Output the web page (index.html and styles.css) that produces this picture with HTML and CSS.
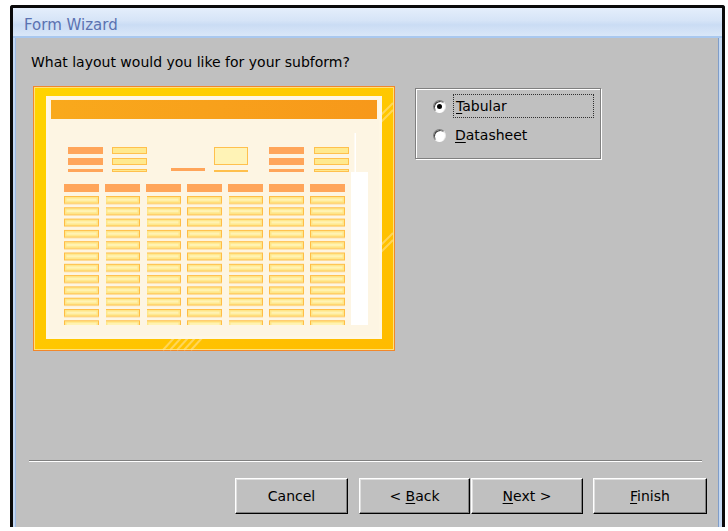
FILE: index.html
```html
<!DOCTYPE html>
<html lang="en">
<head>
<meta charset="utf-8">
<title>Form Wizard</title>
<link rel="stylesheet" href="styles.css">
</head>
<body>
<div class="window">
  <div class="titlebar"><span class="title">Form Wizard</span></div>
  <div class="client">
    <p class="prompt">What layout would you like for your subform?</p>
    <div class="choice-row">
      <svg class="preview" width="362" height="265" viewBox="0 0 362 265">
        <defs>
          <linearGradient id="frameFill" x1="0" y1="0" x2="1" y2="1">
            <stop offset="0" stop-color="#ffd400"/>
            <stop offset="1" stop-color="#ffbb00"/>
          </linearGradient>
          <linearGradient id="headFill" x1="0" y1="0" x2="1" y2="0">
            <stop offset="0" stop-color="#f9a91c"/>
            <stop offset="1" stop-color="#f7981a"/>
          </linearGradient>
          <pattern id="field" x="31" y="110" width="41" height="11.3" patternUnits="userSpaceOnUse">
            <rect x="0.5" y="0.5" width="34" height="7" fill="#ffe78a" stroke="#ffbd45"/>
            <rect x="2.5" y="2.5" width="30" height="2.5" fill="#fff3b4"/>
          </pattern>
          <pattern id="colhead" x="31" y="98" width="41" height="8" patternUnits="userSpaceOnUse">
            <rect x="0" y="0" width="35" height="8" fill="#ffa55a"/>
          </pattern>
        </defs>
        <!-- outer frame -->
        <rect x="0.5" y="0.5" width="361" height="264" fill="url(#frameFill)" stroke="#f2872a"/>
        <rect x="1.5" y="1.5" width="359" height="262" fill="none" stroke="#ffe27a"/>
        <g stroke="#ffe6a0" stroke-width="2" opacity="0.55">
          <line x1="130" y1="264" x2="141" y2="252"/>
          <line x1="137" y1="264" x2="148" y2="252"/>
          <line x1="144" y1="264" x2="155" y2="252"/>
          <line x1="151" y1="264" x2="162" y2="252"/>
          <line x1="158" y1="264" x2="169" y2="252"/>
          <line x1="347" y1="30" x2="360" y2="17"/>
          <line x1="347" y1="37" x2="360" y2="24"/>
          <line x1="347" y1="160" x2="360" y2="147"/>
          <line x1="347" y1="167" x2="360" y2="154"/>
        </g>
        <!-- page area -->
        <rect x="14.5" y="11.5" width="333" height="240" fill="#fdf5e3" stroke="#fff7e4" stroke-width="3"/>
        <rect x="18" y="14" width="326" height="19" fill="url(#headFill)"/>
        <!-- header labels and controls -->
        <g fill="#ffa55a">
          <rect x="35" y="61" width="35" height="7"/>
          <rect x="35" y="72" width="35" height="7"/>
          <rect x="35" y="83" width="35" height="3"/>
          <rect x="138" y="82" width="34" height="3"/>
          <rect x="236" y="61" width="35" height="7"/>
          <rect x="236" y="72" width="35" height="7"/>
          <rect x="236" y="83" width="35" height="3"/>
        </g>
        <g fill="#ffe98e" stroke="#ffc04d">
          <rect x="79.5" y="61.5" width="34" height="6"/>
          <rect x="79.5" y="72.5" width="34" height="6"/>
          <rect x="79.5" y="83.5" width="34" height="2"/>
          <rect x="281.5" y="61.5" width="34" height="6"/>
          <rect x="281.5" y="72.5" width="34" height="6"/>
          <rect x="281.5" y="83.5" width="34" height="2"/>
          <rect x="181.5" y="61.5" width="33" height="17" fill="#fff3b6"/>
          <rect x="181.5" y="84.5" width="33" height="1" fill="#fff3b6"/>
        </g>
        <!-- detail columns -->
        <rect x="31" y="98" width="287" height="8" fill="url(#colhead)"/>
        <rect x="31" y="110" width="287" height="129" fill="url(#field)"/>
        <!-- scroll bar -->
        <rect x="321.5" y="47" width="1.5" height="39" fill="#ffffff"/>
        <rect x="318" y="86" width="17" height="153" fill="#ffffff"/>
      </svg>
      <div class="layout-options">
        <div class="option">
          <span class="radio checked"></span>
          <span class="caption focused"><u>T</u>abular</span>
        </div>
        <div class="option">
          <span class="radio"></span>
          <span class="caption"><u>D</u>atasheet</span>
        </div>
      </div>
    </div>
    <div class="spacer"></div>
    <div class="separator"></div>
    <div class="buttons">
      <button class="btn btn-cancel">Cancel</button>
      <button class="btn btn-back">&lt; <u>B</u>ack</button>
      <button class="btn btn-next"><u>N</u>ext &gt;</button>
      <button class="btn btn-finish"><u>F</u>inish</button>
    </div>
  </div>
</div>
</body>
</html>
```

FILE: styles.css
```css
html, body {
  margin: 0;
  padding: 0;
  background: #ffffff;
  overflow: hidden;
}

body {
  font-family: "DejaVu Sans", "Liberation Sans", sans-serif;
  font-size: 14px;
  color: #000;
}

.window {
  margin: 5px 0 0 10px;
  width: 715px;
  border: 3px solid #0a0a0a;
  border-bottom: none;
  border-radius: 3px 3px 0 0;
  box-sizing: border-box;
  background: #c4d8f2;
}

.titlebar {
  height: 28px;
  border-bottom: 2px solid #a9c8ef;
  background: linear-gradient(to bottom, #e4eefb 0%, #d6e4f7 45%, #cadcf4 60%, #dae7f8 100%);
  display: flex;
  align-items: center;
  padding-left: 11px;
}

.title {
  color: #5b72b1;
  font-size: 15px;
  padding-top: 5px;
}

.client {
  height: 489px;
  margin: 0 4px 4px 3px;
  background: #c0c0c0;
  display: flex;
  flex-direction: column;
  box-shadow: -1px 0 0 #9fbbe3, 1px 0 0 #7f9dc9;
}

.prompt {
  margin: 16px 0 0 15px;
  line-height: 16px;
  height: 16px;
}

.choice-row {
  display: flex;
  align-items: flex-start;
  margin: 16px 0 0 17px;
}

.preview {
  display: block;
  flex: none;
}

.layout-options {
  margin: 2px 0 0 20px;
  width: 186px;
  height: 71px;
  box-sizing: border-box;
  border: 1px solid #808080;
  box-shadow: inset 1px 1px 0 #ffffff, 1px 1px 0 #ffffff;
  padding-top: 5px;
  display: flex;
  flex-direction: column;
  gap: 5px;
}

.option {
  display: flex;
  align-items: center;
  height: 24px;
  padding-left: 17px;
}

.radio {
  width: 13px;
  height: 13px;
  border-radius: 50%;
  box-sizing: border-box;
  background: #ffffff;
  border: 1px solid;
  border-color: #7a7a7a #e8e8e8 #ffffff #7a7a7a;
  box-shadow: inset 1px 1px 0 #404040;
  position: relative;
  flex: none;
}

.radio.checked::after {
  content: "";
  position: absolute;
  left: 3px;
  top: 3px;
  width: 5px;
  height: 5px;
  border-radius: 50%;
  background: #000;
}

.caption {
  margin-left: 6px;
  line-height: 22px;
  padding: 0 2px;
  box-sizing: border-box;
  border: 1px dotted transparent;
}

.caption.focused {
  border-color: #303030;
  width: 141px;
  margin-left: 7px;
}

.caption u, .btn u {
  text-decoration-thickness: 1px;
  text-underline-offset: 2px;
}

.spacer {
  flex: 1;
}

.separator {
  margin: 0 16px 0 13px;
  height: 1px;
  background: #808080;
  border-bottom: 1px solid #ffffff;
}

.buttons {
  display: flex;
  justify-content: flex-end;
  padding: 16px 11px 13px 0;
}

.btn {
  font: inherit;
  color: #000;
  height: 36px;
  background: #c0c0c0;
  border: 1px solid;
  border-color: #ffffff #000000 #000000 #ffffff;
  box-shadow: inset -1px -1px 0 #808080, inset 1px 1px 0 #dfdfdf;
  padding: 0;
  margin: 0;
}

.btn-cancel { width: 113px; }
.btn-back { width: 111px; margin-left: 11px; }
.btn-next { width: 112px; margin-left: 1px; }
.btn-finish { width: 114px; margin-left: 10px; }
```
